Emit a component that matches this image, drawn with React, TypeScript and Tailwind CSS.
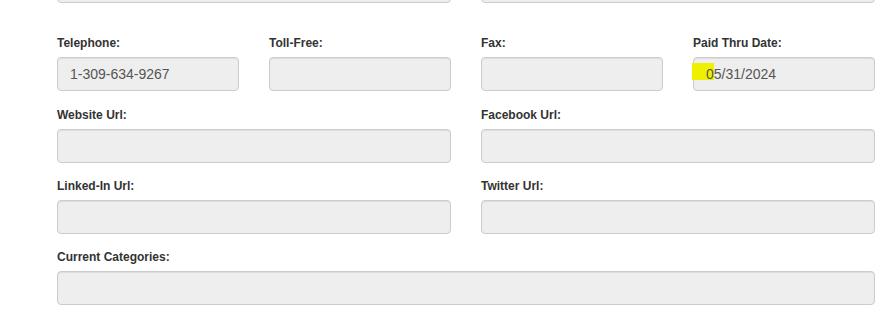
import React from "react";

const Label = ({ children }: { children: React.ReactNode }) => (
  <label className="block text-[12px] leading-[17px] font-bold text-[#333] mb-[5px]">{children}</label>
);

const Input = ({ value, highlight }: { value?: string; highlight?: boolean }) => (
  <div className="relative h-[34px] w-full rounded-[4px] border border-[#ccc] bg-[#eee] px-[12px] flex items-center text-[14px] text-[#555] shadow-[inset_0_1px_1px_rgba(0,0,0,0.075)]">
    {highlight && <span className="absolute left-[-2px] top-[5px] h-[17px] w-[22px] bg-[#eef000]" />}
    <span className="relative">{value}</span>
  </div>
);

export default function App() {
  return (
    <div className="w-[894px] h-[327px] overflow-hidden bg-white" style={{ fontFamily: '"Liberation Sans", Arial, sans-serif' }}>
      <div className="pl-[57px] pr-[19px]">
        <div className="grid grid-cols-2 gap-x-[30px] -mt-[31px]">
          <Input />
          <Input />
        </div>
        <div className="grid grid-cols-4 gap-x-[30px] mt-[32px]">
          <div>
            <Label>Telephone:</Label>
            <Input value="1-309-634-9267" />
          </div>
          <div>
            <Label>Toll-Free:</Label>
            <Input />
          </div>
          <div>
            <Label>Fax:</Label>
            <Input />
          </div>
          <div>
            <Label>Paid Thru Date:</Label>
            <Input value="05/31/2024" highlight />
          </div>
        </div>
        <div className="grid grid-cols-2 gap-x-[30px] mt-[16px]">
          <div>
            <Label>Website Url:</Label>
            <Input />
          </div>
          <div>
            <Label>Facebook Url:</Label>
            <Input />
          </div>
        </div>
        <div className="grid grid-cols-2 gap-x-[30px] mt-[15px]">
          <div>
            <Label>Linked-In Url:</Label>
            <Input />
          </div>
          <div>
            <Label>Twitter Url:</Label>
            <Input />
          </div>
        </div>
        <div className="mt-[15px]">
          <Label>Current Categories:</Label>
          <Input />
        </div>
      </div>
    </div>
  );
}
